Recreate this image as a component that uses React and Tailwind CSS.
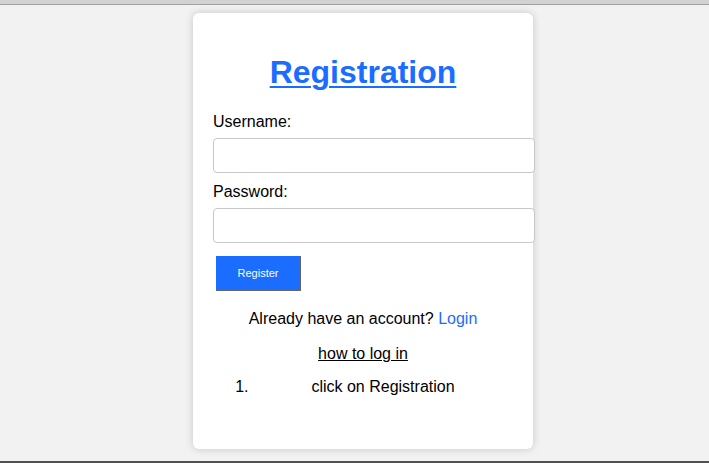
export default function App() {
  return (
    <div className="h-screen flex flex-col bg-[#f2f2f2] font-['Liberation_Sans',Arial,sans-serif] text-black overflow-hidden">
      {/* browser chrome strip */}
      <div className="h-[5px] shrink-0 bg-[#d2d2d2] border-b border-[#9f9f9f]" />

      <div className="flex-1 flex justify-center pt-2 pl-[17px]">
        <div className="w-[340px] h-[436px] bg-white rounded-md shadow-[0_0_8px_rgba(0,0,0,0.18)] p-5">
          <h1 className="mt-[21px] mb-[21px] text-[32px] leading-[37px] font-bold text-center text-[#1a6dff] underline decoration-2 underline-offset-[3px]">
            Registration
          </h1>

          <label className="block text-base leading-[18px] pt-px">Username:</label>
          <input
            type="text"
            className="block mt-[7px] w-[322px] max-w-none h-[35px] border border-[#c8c8c8] rounded-[4px] px-2.5 bg-white"
          />

          <label className="block mt-[9px] text-base leading-[18px] pt-px">Password:</label>
          <input
            type="password"
            className="block mt-[7px] w-[322px] max-w-none h-[35px] border border-[#c8c8c8] rounded-[4px] px-2.5 bg-white"
          />

          <button className="block mt-[13px] ml-[3px] w-[85px] h-[35px] bg-[#1a6dff] text-white text-[11px] border-t border-l border-[#1a6dff] border-r-2 border-b-2 border-r-[#666] border-b-[#666]">
            Register
          </button>

          <p className="mt-[18px] pt-px text-center text-base leading-[18px]">
            Already have an account? <a className="text-[#1a6dff]">Login</a>
          </p>

          <p className="mt-4 pt-px text-center text-base leading-[18px]">
            <a className="underline">how to log in</a>
          </p>

          <ol className="mt-[15px] list-decimal pl-10 text-center text-base leading-[18px]">
            <li>click on Registration</li>
          </ol>
        </div>
      </div>

      <div className="h-[2px] shrink-0 bg-[#505050]" />
    </div>
  );
}
